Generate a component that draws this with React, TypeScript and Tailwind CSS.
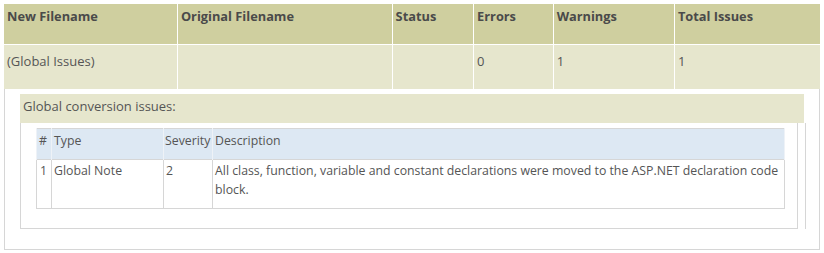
import React from 'react';

const COLUMNS = [
    { key: 'newName', label: 'New Filename', width: 'w-[174px]' },
    { key: 'origName', label: 'Original Filename', width: 'w-[215px]' },
    { key: 'status', label: 'Status', width: 'w-[81px]' },
    { key: 'errors', label: 'Errors', width: 'w-[79px]' },
    { key: 'warnings', label: 'Warnings', width: 'w-[121px]' },
    { key: 'total', label: 'Total Issues', width: 'w-[146px]' },
];

const SUMMARY = {
    newName: '(Global Issues)',
    origName: '',
    status: '',
    errors: '0',
    warnings: '1',
    total: '1',
};

const ISSUES = [
    {
        id: 1,
        type: 'Global Note',
        severity: 2,
        description:
            'All class, function, variable and constant declarations were moved to the ASP.NET declaration code block.',
    },
];

const App: React.FC = () => {
    return (
        <div
            className="w-[824px] h-[253px] bg-white pt-[4px] pl-[4px] text-[12.3px] text-[#555555]"
            style={{ fontFamily: '"Open Sans", "Noto Sans", Arial, sans-serif' }}
        >
            <div className="w-[816px]">
                {/* Report summary table */}
                <div className="flex gap-px bg-white">
                    {COLUMNS.map((col) => (
                        <div
                            key={col.key}
                            className={`${col.width} h-[40px] bg-[#cfcf9f] px-[3px] pt-[3px] text-[12.8px] font-bold text-[#4a4a4a]`}
                        >
                            {col.label}
                        </div>
                    ))}
                </div>
                <div className="flex gap-px bg-white mt-px">
                    {COLUMNS.map((col) => (
                        <div
                            key={col.key}
                            className={`${col.width} h-[44px] bg-[#e6e6cd] px-[3px] pt-[7px] text-[13px]`}
                        >
                            {SUMMARY[col.key as keyof typeof SUMMARY]}
                        </div>
                    ))}
                </div>

                {/* Details for the global issues row */}
                <div className="border-x border-b border-[#d6d6d6] pl-[15px] pr-[15px] pt-[5px] pb-[20px]">
                    <div className="h-[29px] bg-[#e6e6cd] px-[3px] pt-[3px] text-[13px]">Global conversion issues:</div>
                    <div className="w-[786px] border-r border-[#d6d6d6]">
                        <div className="w-[778px] border-x border-b border-[#d6d6d6] pl-[15px] pr-[12px] pt-[5px] pb-[19px]">
                            <table className="w-full border-collapse border border-[#d6d6d6]">
                                <thead>
                                    <tr className="h-[31px] bg-[#dde8f3]">
                                        <th className="w-[15px] border-x border-[#eef2f7] px-[2px] pt-[2px] align-top text-left font-normal leading-[19px]">#</th>
                                        <th className="w-[112px] border-x border-[#eef2f7] px-[2px] pt-[2px] align-top text-left font-normal leading-[19px]">Type</th>
                                        <th className="w-[49px] border-x border-[#eef2f7] px-[1px] pt-[2px] align-top text-left font-normal leading-[19px]">Severity</th>
                                        <th className="border-x border-[#eef2f7] px-[2px] pt-[2px] align-top text-left font-normal leading-[19px]">Description</th>
                                    </tr>
                                </thead>
                                <tbody>
                                    {ISSUES.map((issue) => (
                                        <tr key={issue.id} className="h-[49px] border-t border-[#d6d6d6]">
                                            <td className="border-x border-[#d6d6d6] px-[3px] pt-[1px] align-top leading-[19px]">{issue.id}</td>
                                            <td className="border-x border-[#d6d6d6] px-[2px] pt-[1px] align-top leading-[19px]">{issue.type}</td>
                                            <td className="border-x border-[#d6d6d6] px-[2px] pt-[1px] align-top leading-[19px]">{issue.severity}</td>
                                            <td className="border-x border-[#d6d6d6] px-[2px] pt-[1px] align-top leading-[19px]">{issue.description}</td>
                                        </tr>
                                    ))}
                                </tbody>
                            </table>
                        </div>
                    </div>
                </div>
            </div>
        </div>
    );
};

export default App;
